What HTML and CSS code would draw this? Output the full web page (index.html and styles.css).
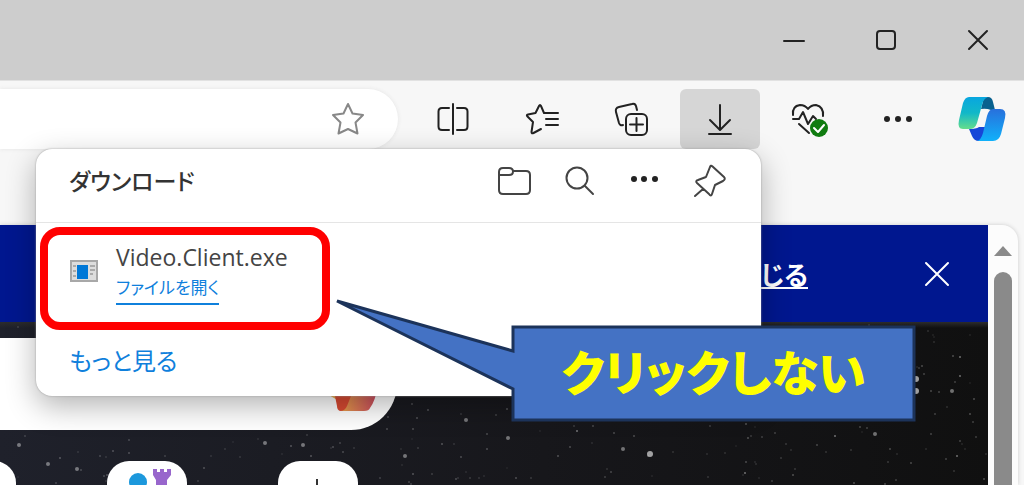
FILE: index.html
```html
<!DOCTYPE html>
<html lang="ja">
<head>
  <meta charset="UTF-8">
  <title>ダウンロード</title>
  <meta name="viewport" content="width=device-width, initial-scale=1.0">
  <link rel="stylesheet" href="styles.css">
</head>
<body>

  <div class="title-bar">
    <button aria-label="最小化"><svg width="24" height="24"><path d="M2 13H22" /></svg></button>
    <button aria-label="最大化"><svg width="24" height="24"><rect x="3" y="3" width="18" height="18" rx="3" /></svg></button>
    <button aria-label="閉じる"><svg width="24" height="24"><path d="M3 3L21 21M21 3L3 21" /></svg></button>
  </div>

  <div class="toolbar">
    <div class="address">
      <button class="favorite" aria-label="お気に入りに追加">
        <svg width="36" height="36"><path d="M18 3L22.500 12.500L33 14L25.500 21.500L27.500 32.500L18 28L8.500 32.500L10.500 21.500L3 14L13.500 12.500Z" /></svg>
      </button>
    </div>
    <button class="tool" aria-label="画面を分割">
      <svg width="36" height="36"><path d="M18 3V33M14 7H7Q3.500 7 3.500 10.500V25.500Q3.500 29 7 29H14M22 7H29Q32.500 7 32.500 10.500V25.500Q32.500 29 29 29H22" /></svg>
    </button>
    <button class="tool" aria-label="お気に入り">
      <svg width="36" height="36"><path d="M20 12H34M22 18H34M22 24H34M20 12L17 5Q16 3 15 5L11.500 12L4 13.500Q2 14 3.500 15.500L9 21L7.500 31Q7.500 33 9.500 32L17 28" /></svg>
    </button>
    <button class="tool" aria-label="コレクション">
      <svg width="36" height="36"><path d="M24 9L23 5Q22 2 19 3L6 6Q2 7 3 11L6 22Q7 25 10 24" /><rect x="13" y="13" width="21" height="21" rx="5" /><path d="M23.500 17V30M17 23.500H30" /></svg>
    </button>
    <button class="tool active" aria-label="ダウンロード">
      <svg width="36" height="36"><path d="M18 4V28M8 19L18 29L28 19M7 33H29" /></svg>
    </button>
    <button class="tool" aria-label="ブラウザーのエッセンシャル">
      <svg width="40" height="36"><path d="M4 14Q3 5 11 4Q16 4 19 8Q22 4 27 4Q35 6 34 15M4 18H10L14 11L19 23L24 15L27 18M10 23L20 32" /><circle class="badge" cx="30" cy="27" r="9" /><path class="check" d="M25 27L29 31L35 24" /></svg>
    </button>
    <button class="tool" aria-label="設定など">
      <svg class="dots" width="36" height="36"><circle cx="7" cy="18" r="3" /><circle cx="18" cy="18" r="3" /><circle cx="29" cy="18" r="3" /></svg>
    </button>
    <button class="tool copilot" aria-label="Copilot">
      <svg width="50" height="46">
        <defs>
          <linearGradient id="teal" x1="0" y1="0" x2="0" y2="1"><stop offset="0" stop-color="#08a6e0" /><stop offset=".5" stop-color="#12b8c8" /><stop offset="1" stop-color="#65dd8c" /></linearGradient>
          <linearGradient id="blue" x1="0" y1="0" x2="0" y2="1"><stop offset="0" stop-color="#2870dc" /><stop offset="1" stop-color="#10b1fa" /></linearGradient>
        </defs>
        <path fill="#08618f" d="M27 1H31Q35 1 36 6L38 14H34Q29 12 24 13Z" />
        <path fill="#1746d8" d="M12 33Q19 33 22 31H28V45H22Q17 45 15 40Z" />
        <path fill="url(#teal)" d="M12 1H31Q26 3 25 9L20 27Q18 33 13 33H6Q0 33 2 24L6 7Q8 1 12 1Z" />
        <path fill="url(#blue)" d="M36 13H43Q50 13 48 22L44 38Q42 45 36 45H20Q24 44 26 37L30 20Q32 13 36 13Z" />
      </svg>
    </button>

    <div class="downloads">
      <div class="downloads-header">
        <h1>ダウンロード</h1>
        <button aria-label="フォルダーを開く">
          <svg width="36" height="36"><path d="M2 12V9Q2 5 6 5H12Q16 5 16 8.500T12 12H2M16 8H29Q33 8 33 12V27Q33 31 29 31H6Q2 31 2 27V11" /></svg>
        </button>
        <button aria-label="検索">
          <svg width="36" height="36"><circle cx="15" cy="15" r="10.500" /><path d="M23 23L31 31" /></svg>
        </button>
        <button aria-label="その他">
          <svg class="dots" width="36" height="36"><circle cx="7" cy="16" r="3" /><circle cx="17" cy="16" r="3" /><circle cx="28" cy="16" r="3" /></svg>
        </button>
        <button aria-label="ピン留め">
          <svg width="36" height="36"><path d="M20 3L32 14Q34 16 31 18L23 22L20 31Q19 34 17 31L5 20Q3 18 6 17L14 14L18 4Q19 2 20 3ZM11 26L3 33" /></svg>
        </button>
      </div>
      <div class="download-item">
        <svg width="28" height="22"><rect x="1" y="1" width="26" height="20" fill="#ddd" stroke="#a8a8a8" stroke-width="2" /><path d="M3 6H6M3 11H6M3 16H6M20 6H25M20 10H25M20 14H23" stroke="#aaa" stroke-width="2" /><rect x="7" y="5" width="11" height="14" fill="#0078d7" /></svg>
        <div class="file">
          <span class="file-name">Video.Client.exe</span>
          <a href="#">ファイルを開く</a>
        </div>
      </div>
      <a class="see-more" href="#">もっと見る</a>

      <div class="highlight"></div>
      <div class="callout">
        <svg width="582" height="124"><path d="M3 2L179 52V28H580V121H179V90Z" /></svg>
        <strong>クリックしない</strong>
      </div>
    </div>
  </div>

  <div class="page">
    <div class="content">
      <div class="banner">
        <a href="#">閉じる</a>
        <button aria-label="バナーを閉じる"><svg width="26" height="26"><path d="M2 2L24 24M24 2L2 24" /></svg></button>
      </div>
      <div class="sky">
        <svg class="stars" id="stars"></svg>
        <div class="search">
          <svg width="50" height="46">
            <defs><linearGradient id="warm"><stop offset="0" stop-color="#e8a04a" /><stop offset="1" stop-color="#c84460" /></linearGradient></defs>
            <path fill="#f0ad45" d="M0 26H24L14 34Z" />
            <path fill="url(#warm)" d="M18 14H52Q48 34 43 40Q42 43 37 43H14Z" />
            <path fill="#d94a32" d="M8 28H24L20 38Q18 43 13 43Q10 42 10 38Z" />
          </svg>
        </div>
        <div class="tiles">
          <a href="#" aria-label="サイト"></a>
          <a href="#" aria-label="ゲーム">
            <svg width="44" height="44"><circle cx="13" cy="13" r="9" fill="#1c98dc" /><path fill="#9866cc" d="M28 0H32V3H35V0H39V3H42V0H46V6L42 11V32H31V11L28 6Z" /></svg>
          </a>
          <a href="#" aria-label="サイトの追加"><svg width="44" height="44"><path d="M21 10V38M7 24H35" stroke="#333" stroke-width="2" /></svg></a>
        </div>
      </div>
    </div>
    <div class="scrollbar">
      <div class="arrow"></div>
      <div class="thumb"></div>
    </div>
  </div>

  <script>
    // brighter stars: x, y, radius
    const bright = [
      [650, 132, 3], [466, 98, 2], [405, 134, 2], [303, 123, 2], [265, 121, 2], [48, 142, 2],
      [77, 147, 2], [19, 123, 2], [508, 116, 2], [577, 109, 1], [623, 127, 2], [875, 112, 2],
      [835, 114, 1], [952, 69, 2], [960, 54, 1], [960, 35, 1], [957, 134, 1], [745, 151, 1],
      [916, 57, 3], [916, 69, 3]
    ];
    const stars = document.getElementById('stars');
    let seed = 17;

    function rand() {
      seed = (seed * 16807) % 2147483647;
      return seed / 2147483647;
    }

    let html = '';
    for (let i = 0; i < 340; i++) {
      const x = Math.round(rand() * 988);
      const y = Math.round(rand() * 163);
      html += `<circle cx="${x}" cy="${y}" r="1" opacity="${(0.06 + rand() * 0.2).toFixed(2)}" />`;
    }
    for (const [x, y, r] of bright) {
      html += `<circle cx="${x}" cy="${y}" r="${r}" opacity="${r === 3 ? 0.6 : 0.4}" />`;
    }
    stars.innerHTML = html;
  </script>

</body>
</html>
```
FILE: styles.css
```css
* { margin: 0; padding: 0; box-sizing: border-box; }
body {
  background: #f7f7f7;
  font-family: "Open Sans", "Noto Sans CJK JP", sans-serif;
  font-feature-settings: "palt";
  display: flex;
  flex-direction: column;
  height: 100vh;
  overflow: hidden;
}
button {
  background: none;
  border: none;
  display: flex;
  justify-content: center;
  align-items: center;
  cursor: pointer;
}
button svg {
  fill: none;
  stroke: #222;
  stroke-width: 2;
  stroke-linejoin: round;
  stroke-linecap: round;
}
svg {
  display: block;
  flex: none;
}
.title-bar {
  background: #cdcdcd;
  height: 81px;
  flex: none;
  display: flex;
  justify-content: flex-end;
  border-bottom: 1px solid #e2e2e2;
}
.title-bar button {
  width: 92px;
}
.toolbar {
  position: relative;
  z-index: 10;
  height: 144px;
  flex: none;
  display: flex;
  align-items: flex-start;
  gap: 9px;
  padding: 8px 7px 0 0;
}
.address {
  flex: 1;
  height: 60px;
  background: white;
  border-radius: 0 30px 30px 0;
  margin-right: 6px;
  display: flex;
  justify-content: flex-end;
  box-shadow: 0 0 4px #e4e4e4;
}
.favorite {
  width: 100px;
}
.favorite svg {
  stroke: #888;
}
.tool {
  width: 80px;
  height: 60px;
  border-radius: 6px;
}
.tool.active {
  background: #d6d6d6;
}
.copilot {
  width: 70px;
}
.copilot svg {
  stroke: none;
}
.tool .badge {
  fill: #107c10;
  stroke: none;
}
.tool .check {
  stroke: white;
}
.downloads {
  position: absolute;
  top: 68px;
  right: 263px;
  width: 725px;
  height: 247px;
  background: white;
  border-radius: 16px;
  box-shadow: 0 0 2px #999, 0 10px 30px rgba(0, 0, 0, 0.3);
}
.downloads-header {
  height: 74px;
  padding: 0 19px 10px 33px;
  border-bottom: 1px solid #e5e5e5;
  display: flex;
}
.downloads-header h1 {
  flex: 1;
  font-size: 23px;
  line-height: 64px;
  font-weight: 500;
  color: #333;
}
.downloads-header button {
  width: 65px;
}
.downloads-header svg {
  stroke: #444;
}
button .dots {
  fill: #222;
  stroke: none;
}
.download-item {
  display: flex;
  align-items: center;
  gap: 18px;
  height: 96px;
  padding: 0 34px;
}
.file {
  display: flex;
  flex-direction: column;
  align-items: flex-start;
  padding-top: 4px;
}
.file-name {
  font-size: 23px;
  line-height: 32px;
  color: #444;
}
.file a {
  font-size: 17px;
  line-height: 30px;
  color: #0f80dc;
  text-decoration: none;
  border-bottom: 2px solid #0f80dc;
}
.see-more {
  display: inline-block;
  margin: 24px 33px;
  font-size: 24px;
  line-height: 36px;
  color: #0f80dc;
  text-decoration: none;
}
.highlight {
  position: absolute;
  top: 78px;
  left: 4px;
  width: 290px;
  height: 103px;
  border: 8px solid red;
  border-radius: 20px;
}
.callout {
  position: absolute;
  top: 150px;
  left: 298px;
}
.callout path {
  fill: #4472c4;
  stroke: #1c335a;
  stroke-width: 3;
}
.callout strong {
  position: absolute;
  top: 28px;
  left: 179px;
  right: 2px;
  text-align: center;
  font-size: 48px;
  line-height: 92px;
  font-weight: 900;
  color: yellow;
}
.page {
  flex: 1;
  margin-right: 6px;
  display: flex;
  background: #fcfcfc;
  border-radius: 0 16px 0 0;
  box-shadow: 0 0 4px #ccc;
  overflow: hidden;
}
.content {
  flex: 1;
  display: flex;
  flex-direction: column;
}
.banner {
  height: 97px;
  flex: none;
  background: #00178f;
  display: flex;
  justify-content: flex-end;
  align-items: center;
  gap: 89px;
  padding-right: 11px;
}
.banner a {
  color: white;
  font-size: 26px;
  font-weight: bold;
}
.banner button {
  width: 80px;
  height: 80px;
}
.banner svg {
  stroke: white;
}
.sky {
  position: relative;
  flex: 1;
  overflow: hidden;
  padding-top: 16px;
  background: linear-gradient(#2c2c2c, transparent 6px), linear-gradient(to right, #1f212b, #17171b 55%, #101010);
}
.stars {
  position: absolute;
  top: 0;
  left: 0;
  width: 100%;
  height: 100%;
  fill: white;
}
.search {
  position: relative;
  width: 397px;
  height: 92px;
  background: white;
  border-radius: 0 46px 46px 0;
  display: flex;
  justify-content: flex-end;
  padding: 30px 20px;
}
.search svg {
  overflow: visible;
}
.tiles {
  position: relative;
  display: flex;
  gap: 91px;
  margin: 31px 0 0 -64px;
}
.tiles a {
  width: 80px;
  height: 80px;
  flex: none;
  background: white;
  border-radius: 22px;
  display: flex;
  justify-content: center;
  padding-top: 8px;
}
.tiles svg {
  overflow: visible;
}
.scrollbar {
  width: 30px;
  display: flex;
  flex-direction: column;
  align-items: center;
  padding-top: 21px;
}
.arrow {
  border: 9px solid transparent;
  border-top: none;
  border-bottom: 10px solid #8a8a8a;
}
.thumb {
  width: 18px;
  flex: 1;
  margin-top: 16px;
  background: #8a8a8a;
  border-radius: 9px 9px 0 0;
}
```
